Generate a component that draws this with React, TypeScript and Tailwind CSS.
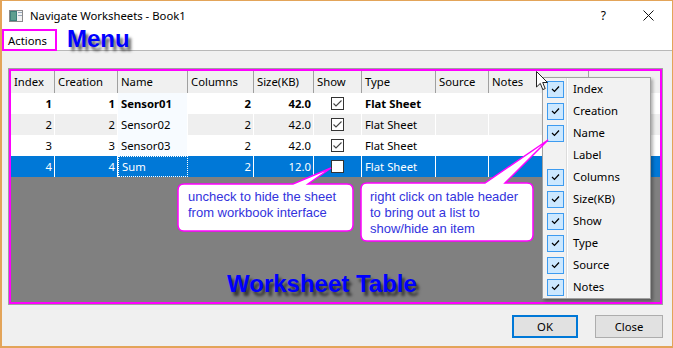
import React from "react";

const UI = { fontFamily: '"Noto Sans", "Open Sans", sans-serif' };
const ARIAL = { fontFamily: '"Liberation Sans", Arial, sans-serif' };

const colW = [44, 63, 70, 66, 60, 48, 74, 53, 100];
const headers = ["Index", "Creation", "Name", "Columns", "Size(KB)", "Show", "Type", "Source", "Notes"];

const rows: { cells: string[]; show: boolean; bold?: boolean; bg: string; sel?: boolean }[] = [
  { cells: ["1", "1", "Sensor01", "2", "42.0", "", "Flat Sheet", "", ""], show: true, bold: true, bg: "bg-white" },
  { cells: ["2", "2", "Sensor02", "2", "42.0", "", "Flat Sheet", "", ""], show: true, bg: "bg-[#efefef]" },
  { cells: ["3", "3", "Sensor03", "2", "42.0", "", "Flat Sheet", "", ""], show: true, bg: "bg-white" },
  { cells: ["4", "4", "Sum", "2", "12.0", "", "Flat Sheet", "", ""], show: false, bg: "bg-[#0078d7]", sel: true },
];

const rightCols = new Set([0, 1, 3, 4]);

function ShowBox({ checked }: { checked: boolean }) {
  return (
    <div className="w-[13px] h-[13px] border border-[#333] bg-white flex items-center justify-center">
      {checked && (
        <svg width="11" height="11" viewBox="0 0 11 11">
          <polyline points="1.5,5.5 4,8 9.5,2.5" fill="none" stroke="#444" strokeWidth="1.1" />
        </svg>
      )}
    </div>
  );
}

const menuItems: { label: string; checked: boolean }[] = [
  { label: "Index", checked: true },
  { label: "Creation", checked: true },
  { label: "Name", checked: true },
  { label: "Label", checked: false },
  { label: "Columns", checked: true },
  { label: "Size(KB)", checked: true },
  { label: "Show", checked: true },
  { label: "Type", checked: true },
  { label: "Source", checked: true },
  { label: "Notes", checked: true },
];

export default function App() {
  return (
    <div
      className="relative w-[673px] h-[348px] bg-white border border-l-2 border-b-2 border-[#e3a459] flex flex-col overflow-hidden text-black"
      style={UI}
    >
      {/* Title bar */}
      <div className="h-[28px] flex items-center shrink-0">
        <div className="ml-[7px] mt-[1px]">
          <svg width="14" height="12" viewBox="0 0 14 12">
            <rect x="0.5" y="0.5" width="13" height="11" fill="#f2f2f2" stroke="#8a8a8a" />
            <rect x="1" y="1" width="7" height="10" fill="#3f7f7a" />
            <rect x="2" y="2" width="5" height="8" fill="#5f9f8f" />
            <rect x="9" y="2" width="4" height="1" fill="#9ab" />
            <rect x="9" y="5" width="4" height="1" fill="#9ab" />
          </svg>
        </div>
        <div className="ml-[7px] text-[11.3px] leading-none mt-[2px]">Navigate Worksheets - Book1</div>
        <div className="flex-1" />
        <div className="text-[12px] leading-none mr-[37px] mt-[1px]">?</div>
        <div className="mr-[18px] mt-[1px]">
          <svg width="11" height="11" viewBox="0 0 11 11">
            <line x1="0.5" y1="0.5" x2="10.5" y2="10.5" stroke="#111" strokeWidth="1" />
            <line x1="10.5" y1="0.5" x2="0.5" y2="10.5" stroke="#111" strokeWidth="1" />
          </svg>
        </div>
      </div>

      {/* Menu bar */}
      <div className="h-[21px] flex shrink-0 relative z-10">
        <div className="w-[55px] h-[22px] border-2 border-[#ff00ff] flex items-center pl-[4px] text-[11.3px] leading-none">
          <span className="mt-[2px]">Actions</span>
        </div>
      </div>
      <div className="h-px bg-[#b8b8b8] shrink-0" />

      {/* Client area */}
      <div className="flex-1 bg-[#f0f0f0] flex flex-col pt-[17px]">
        <div className="ml-[6px] mr-[9px] h-[237px] border border-[#a0a0a0] flex flex-col">
          <div className="flex-1 border-2 border-[#ff00ff] bg-[#808080] flex flex-col overflow-hidden">
            {/* Header */}
            <div className="h-[22px] flex bg-[#f0f0f0] shrink-0 text-[11.3px]">
              {headers.map((h, i) => (
                <div
                  key={h}
                  style={{ width: colW[i] }}
                  className="shrink-0 border-r border-[#a0a0a0] flex items-center pl-[3px] leading-none"
                >
                  {h}
                </div>
              ))}
              <div className="flex-1" />
            </div>
            {/* Rows */}
            {rows.map((r, ri) => (
              <div key={ri} className={`h-[21px] flex shrink-0 text-[11.3px] ${r.bg} ${r.sel ? "text-white" : ""} ${r.bold ? "font-bold" : ""}`}>
                {colW.map((w, ci) => {
                  const isName = ci === 2;
                  let cls = "shrink-0 border-r border-white flex items-center leading-none";
                  if (rightCols.has(ci)) cls += " justify-end pr-[2px]";
                  else if (ci === 5) cls += " justify-center";
                  else cls += " pl-[3px]";
                  if (isName && !r.sel) cls += " bg-[#f7fbff]";
                  if (isName && r.sel) cls += " border border-dotted border-white";
                  return (
                    <div key={ci} style={{ width: w }} className={cls}>
                      {ci === 5 ? <ShowBox checked={r.show} /> : r.cells[ci]}
                    </div>
                  );
                })}
                <div className="flex-1" />
              </div>
            ))}
            <div className="flex-1" />
          </div>
        </div>

        {/* Buttons */}
        <div className="flex justify-end gap-[17px] mt-[10px] mr-[9px] text-[11.3px]">
          <div className="w-[66px] h-[23px] border-2 border-[#0078d7] bg-[#e1e1e1] flex items-center justify-center leading-none">
            OK
          </div>
          <div className="w-[68px] h-[23px] border border-[#adadad] bg-[#e1e1e1] flex items-center justify-center leading-none">
            Close
          </div>
        </div>
      </div>

      {/* Overlays in page coordinates */}
      <div className="absolute left-[-2px] top-[-1px] w-[673px] h-[348px] pointer-events-none">
        {/* Menu annotation text */}
        <div
          className="absolute left-[67px] top-[27px] text-[24px] leading-[24px] font-bold text-[#0000ff] [text-shadow:3px_4px_3px_rgba(0,0,0,0.6)]"
          style={ARIAL}
        >
          Menu
        </div>

        {/* Worksheet Table annotation */}
        <div
          className="absolute left-[227px] top-[272px] text-[24px] leading-[24px] font-bold text-[#0000ff] [text-shadow:3px_4px_3px_rgba(0,0,0,0.6)]"
          style={ARIAL}
        >
          Worksheet Table
        </div>

        {/* Context menu */}
        <div className="absolute left-[542px] top-[77px] w-[109px] h-[222px] bg-[#f2f2f2] border border-[#a0a0a0] shadow-[2px_2px_3px_rgba(0,0,0,0.3)] text-[11.3px]">
          <div className="absolute left-[23px] top-0 bottom-0 w-px bg-[#dcdcdc]" />
          <div className="absolute left-[24px] top-0 bottom-0 w-px bg-white" />
          <div className="flex flex-col">
            {menuItems.map((m) => (
              <div key={m.label} className="h-[22px] flex items-center">
                <div className="w-[30px] shrink-0 flex items-center pl-[4px]">
                  {m.checked && (
                    <div className="w-[17px] h-[17px] bg-[#cce8ff] border border-[#3d9bf0] flex items-center justify-center">
                      <svg width="9" height="8" viewBox="0 0 9 8">
                        <polyline points="1,4 3.5,6.5 8,1.5" fill="none" stroke="#000" strokeWidth="1.2" />
                      </svg>
                    </div>
                  )}
                </div>
                <span className="leading-none">{m.label}</span>
              </div>
            ))}
          </div>
        </div>

        {/* Callout shapes */}
        <svg className="absolute left-0 top-0" width="673" height="348" viewBox="0 0 673 348">
          <path
            d="M184 184 H293 L331 168 L308 184 H347 Q353 184 353 190 V225 Q353 231 347 231 H184 Q178 231 178 225 V190 Q178 184 184 184 Z"
            fill="#ffffff"
            stroke="#ff00ff"
            strokeWidth="1.5"
          />
          <path
            d="M367 183 H485 L548 140 L505 183 H527 Q533 183 533 189 V235 Q533 241 527 241 H367 Q361 241 361 235 V189 Q361 183 367 183 Z"
            fill="#ffffff"
            stroke="#ff00ff"
            strokeWidth="1.5"
          />
        </svg>

        {/* Callout texts */}
        <div className="absolute left-[188px] top-[189px] text-[13px] leading-[16px] text-[#3333dd] whitespace-nowrap" style={ARIAL}>
          <div>uncheck to hide the sheet</div>
          <div>from workbook interface</div>
        </div>
        <div className="absolute left-[370px] top-[189px] text-[13px] leading-[16px] text-[#3333dd] whitespace-nowrap" style={ARIAL}>
          <div>right click on table header</div>
          <div>to bring out a list to</div>
          <div>show/hide an item</div>
        </div>

        {/* Mouse cursor */}
        <svg className="absolute left-[536px] top-[71px]" width="13" height="21" viewBox="0 0 13 21">
          <path d="M0.5 0.5 L0.5 16 L4.3 12.4 L6.8 18.6 L9.2 17.6 L6.7 11.5 L11.5 11.5 Z" fill="#fff" stroke="#222" strokeWidth="1" />
        </svg>
      </div>
    </div>
  );
}
